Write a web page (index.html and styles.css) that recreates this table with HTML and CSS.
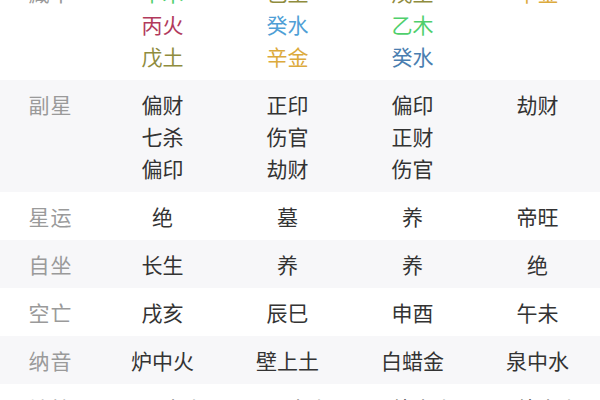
FILE: index.html
```html
<!DOCTYPE html>
<html lang="zh-CN">
<head>
<meta charset="utf-8">
<link rel="stylesheet" href="styles.css">
</head>
<body>
<div class="table">
  <div class="row">
    <div class="label">藏干</div>
    <div class="cell"><span class="mu">甲木</span><span class="huo">丙火</span><span class="tu">戊土</span></div>
    <div class="cell"><span class="tu">己土</span><span class="shui">癸水</span><span class="jin">辛金</span></div>
    <div class="cell"><span class="tu">戊土</span><span class="mu">乙木</span><span class="shui2">癸水</span></div>
    <div class="cell"><span class="jin">辛金</span></div>
  </div>
  <div class="row alt">
    <div class="label">副星</div>
    <div class="cell"><span>偏财</span><span>七杀</span><span>偏印</span></div>
    <div class="cell"><span>正印</span><span>伤官</span><span>劫财</span></div>
    <div class="cell"><span>偏印</span><span>正财</span><span>伤官</span></div>
    <div class="cell"><span>劫财</span></div>
  </div>
  <div class="row">
    <div class="label">星运</div>
    <div class="cell"><span>绝</span></div>
    <div class="cell"><span>墓</span></div>
    <div class="cell"><span>养</span></div>
    <div class="cell"><span>帝旺</span></div>
  </div>
  <div class="row alt">
    <div class="label">自坐</div>
    <div class="cell"><span>长生</span></div>
    <div class="cell"><span>养</span></div>
    <div class="cell"><span>养</span></div>
    <div class="cell"><span>绝</span></div>
  </div>
  <div class="row">
    <div class="label">空亡</div>
    <div class="cell"><span>戌亥</span></div>
    <div class="cell"><span>辰巳</span></div>
    <div class="cell"><span>申酉</span></div>
    <div class="cell"><span>午未</span></div>
  </div>
  <div class="row alt">
    <div class="label">纳音</div>
    <div class="cell"><span>炉中火</span></div>
    <div class="cell"><span>壁上土</span></div>
    <div class="cell"><span>白蜡金</span></div>
    <div class="cell"><span>泉中水</span></div>
  </div>
  <div class="row">
    <div class="label">神煞</div>
    <div class="cell"><span>天乙贵人</span></div>
    <div class="cell"><span>国印贵人</span></div>
    <div class="cell"><span>天德贵人</span></div>
    <div class="cell"><span>月德贵人</span></div>
  </div>
</div>
</body>
</html>
```
FILE: styles.css
```css
html, body {
  margin: 0;
  padding: 0;
  background: #ffffff;
  overflow: hidden;
}
body {
  width: 600px;
  height: 400px;
  font-family: "Noto Sans CJK SC", "Noto Sans", sans-serif;
}
.table {
  margin-top: -32px;
}
.row {
  display: grid;
  grid-template-columns: 100px repeat(4, 1fr);
  padding: 8px 0;
  background: #ffffff;
}
.row.alt {
  background: #f7f7f9;
}
.label {
  text-align: center;
  font-size: 21px;
  line-height: 32px;
  color: #9a9a9a;
  letter-spacing: 1px;
  padding-left: 1px;
}
.cell {
  display: flex;
  flex-direction: column;
  align-items: center;
  font-size: 21px;
  line-height: 32px;
  color: #333333;
}
.huo { color: #b23a5c; }
.tu { color: #8f8c3e; }
.shui { color: #4f9fd6; }
.shui2 { color: #4a7eb0; }
.jin { color: #dcaa3c; }
.mu { color: #4fcf6c; }
```
